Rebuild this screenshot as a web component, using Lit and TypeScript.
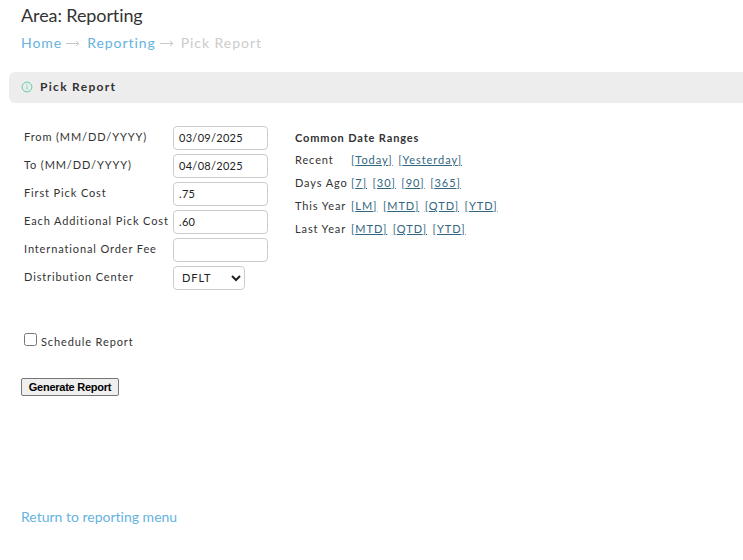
import { LitElement, css, html } from "lit";
import { customElement, state } from "lit/decorators.js";

interface Field {
  name: string;
  label: string;
  value: string;
}

interface DateRange {
  label: string;
  links: string[];
}

@customElement("date-ranges")
export class DateRanges extends LitElement {
  private ranges: DateRange[] = [
    { label: "Recent", links: ["Today", "Yesterday"] },
    { label: "Days Ago", links: ["7", "30", "90", "365"] },
    { label: "This Year", links: ["LM", "MTD", "QTD", "YTD"] },
    { label: "Last Year", links: ["MTD", "QTD", "YTD"] },
  ];

  render() {
    return html`
      <div class="title">Common Date Ranges</div>
      ${this.ranges.map(
        (range) => html`
          <div class="row">
            <span class="label">${range.label}</span>
            ${range.links.map((link) => html`<a class="link" href="#">[${link}]</a>`)}
          </div>
        `
      )}
    `;
  }

  static styles = css`
    :host {
      display: block;
    }
    .title {
      font-weight: 700;
      height: 21px;
      line-height: 22px;
      letter-spacing: 0.87px;
    }
    .row {
      display: flex;
      height: 23px;
      line-height: 23px;
      white-space: nowrap;
    }
    .label {
      width: 56px;
      flex: none;
    }
    .link {
      color: #336680;
      margin-right: 5.5px;
      letter-spacing: 0.95px;
      text-decoration: underline;
    }
  `;
}

@customElement("app-root")
export class AppRoot extends LitElement {
  @state()
  private fields: Field[] = [
    { name: "from", label: "From (MM/DD/YYYY)", value: "03/09/2025" },
    { name: "to", label: "To (MM/DD/YYYY)", value: "04/08/2025" },
    { name: "first", label: "First Pick Cost", value: ".75" },
    { name: "additional", label: "Each Additional Pick Cost", value: ".60" },
    { name: "international", label: "International Order Fee", value: "" },
  ];

  render() {
    return html`
      <h1 class="area">Area: Reporting</h1>
      <nav class="crumbs">
        <a class="crumb" href="#">Home</a>
        ${this._arrow()}
        <a class="crumb" href="#">Reporting</a>
        ${this._arrow()}
        <span>Pick Report</span>
      </nav>
      <div class="bar">
        <svg class="info" width="12" height="12" viewBox="0 0 12 12">
          <circle cx="6" cy="6" r="4.9" fill="none" stroke="#62cda2"></circle>
          <path d="M6 3V4.2M6 5V8.6" fill="none" stroke="#7dd3ad"></path>
        </svg>
        <span>Pick Report</span>
      </div>
      <form class="form">
        <div class="fields">
          ${this.fields.map(
            (field) => html`
              <label class="label" for=${field.name}>${field.label}</label>
              <input class="input" id=${field.name} type="text" .value=${field.value} />
            `
          )}
          <label class="label" for="center">Distribution Center</label>
          <select class="select" id="center">
            <option>DFLT</option>
          </select>
        </div>
        <date-ranges class="ranges"></date-ranges>
      </form>
      <label class="schedule">
        <input class="check" type="checkbox" />
        <span class="check-text">Schedule Report</span>
      </label>
      <button class="generate" type="button">Generate Report</button>
      <a class="return" href="#">Return to reporting menu</a>
    `;
  }

  _arrow() {
    return html`
      <svg class="arrow" width="14" height="8" viewBox="0 0 14 8">
        <path d="M0 4.5H13M10 2L13 4.5L10 7" fill="none" stroke="#c8c8c8"></path>
      </svg>
    `;
  }

  static styles = css`
    :host {
      display: flex;
      flex-direction: column;
      align-items: flex-start;
      box-sizing: border-box;
      height: 560px;
      overflow: hidden;
      background: #fff;
      color: #333;
      font-family: Lato, sans-serif;
      font-size: 11px;
      font-variant-ligatures: none;
      letter-spacing: 0.88px;
    }
    a {
      color: #66b3e0;
      text-decoration: none;
    }
    .area {
      margin: 3px 0 0 21px;
      font-size: 18px;
      font-weight: 400;
      line-height: 24px;
      letter-spacing: -0.1px;
    }
    .crumbs {
      display: flex;
      align-items: center;
      margin: 6px 0 0 21px;
      height: 20px;
      font-size: 14px;
      line-height: 20px;
      letter-spacing: 0.95px;
      color: #ccc;
    }
    .arrow {
      margin: 0 7px 0 4px;
    }
    .bar {
      display: flex;
      align-items: center;
      box-sizing: border-box;
      width: 740px;
      height: 31px;
      margin: 19px 0 0 9px;
      padding: 0 0 2px 12px;
      border-radius: 6px;
      background: #ededed;
      font-size: 12px;
      font-weight: 700;
      letter-spacing: 1.3px;
    }
    .info {
      margin-right: 7px;
    }
    .form {
      display: flex;
      margin: 23px 0 0 24px;
    }
    .fields {
      display: grid;
      grid-template-columns: 149px 95px;
      grid-auto-rows: 24px;
      row-gap: 4px;
    }
    .label {
      line-height: 22px;
      white-space: nowrap;
    }
    .input,
    .select {
      box-sizing: border-box;
      height: 24px;
      margin: 0;
      border: 1px solid #ccc;
      border-radius: 4px;
      background: #fff;
      color: #222;
      font-family: Lato, sans-serif;
      font-size: 11px;
      letter-spacing: 0.3px;
    }
    .input {
      width: 95px;
      padding: 0 5px 1px;
    }
    .select {
      width: 72px;
      padding: 0 4px 1px;
      letter-spacing: 0.9px;
    }
    .ranges {
      margin: 1px 0 0 27px;
    }
    .schedule {
      display: flex;
      margin: 43px 0 0 24px;
      height: 18px;
    }
    .check {
      width: 13px;
      height: 13px;
      margin: 0 4px 0 0;
    }
    .check-text {
      line-height: 18px;
    }
    .generate {
      box-sizing: border-box;
      width: 98px;
      height: 18px;
      margin: 27px 0 0 21px;
      padding: 0;
      border: 1px solid #767676;
      border-radius: 2px;
      background: #efefef;
      color: #000;
      font: 700 11px "Liberation Sans", sans-serif;
      letter-spacing: -0.25px;
    }
    .return {
      margin: 111px 0 0 21px;
      font-size: 14px;
      line-height: 20px;
      letter-spacing: 0;
    }
  `;
}
